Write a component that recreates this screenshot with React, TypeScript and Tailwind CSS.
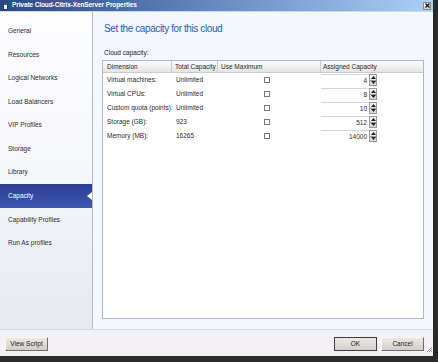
import React from 'react';

// Nav entries for the left rail
const navItems = [
  'General',
  'Resources',
  'Logical Networks',
  'Load Balancers',
  'VIP Profiles',
  'Storage',
  'Library',
  'Capacity',
  'Capability Profiles',
  'Run As profiles',
];

const capacityRows: [string, string, string][] = [
  ['Virtual machines:', 'Unlimited', '4'],
  ['Virtual CPUs:', 'Unlimited', '8'],
  ['Custom quota (points):', 'Unlimited', '10'],
  ['Storage (GB):', '923', '512'],
  ['Memory (MB):', '16265', '14000'],
];

const Spinner = () => (
  <div className="w-[8px] h-[12px] flex flex-col border border-[#9a9a9a] bg-gradient-to-b from-[#f4f4f4] to-[#d6d6d6]">
    <div className="flex-1 flex items-center justify-center border-b border-[#9a9a9a]">
      <svg width="5" height="3" viewBox="0 0 5 3">
        <path d="M0 3 L2.5 0 L5 3 Z" fill="#222" />
      </svg>
    </div>
    <div className="flex-1 flex items-center justify-center">
      <svg width="5" height="3" viewBox="0 0 5 3">
        <path d="M0 0 L2.5 3 L5 0 Z" fill="#222" />
      </svg>
    </div>
  </div>
);

const DialogButton = ({ label, isDefault }: { label: string; isDefault?: boolean }) => (
  <button
    className={`w-[43px] h-[14px] flex items-center justify-center text-[6.5px] text-[#222] bg-gradient-to-b from-[#ebe9e6] to-[#d2cfca] border ${
      isDefault ? 'border-[#3c3c3c]' : 'border-t-[#f8f8f8] border-l-[#f8f8f8] border-r-[#6e6e6e] border-b-[#6e6e6e]'
    }`}
  >
    {label}
  </button>
);

export default function App() {
  return (
    <div className="w-[438px] h-[362px] bg-[#2a2a2a] flex flex-col font-['Liberation_Sans',Arial,sans-serif] overflow-hidden">
      <div className="flex h-[356px]">
        <div className="w-[433px] flex flex-col bg-[#f5f7fe]">
          {/* Title bar */}
          <div className="h-[12px] flex items-center bg-gradient-to-r from-[#2b4886] via-[#6989c4] to-[#acd0f6] border-b border-[#c8d8ee]">
            <div className="ml-[3px] w-[5px] h-[8px] bg-[#f2f4fa] border border-[#2a3f78] flex flex-col">
              <div className="h-[2px] bg-[#3a5aa8]" />
            </div>
            <span className="ml-[4px] text-[6.5px] font-bold text-white tracking-[-0.1px] leading-none">
              Private Cloud-Citrix-XenServer Properties
            </span>
            <div className="ml-auto mr-[2px] w-[8px] h-[8px] border border-[#8a8a8a] bg-gradient-to-b from-[#f8f8f8] to-[#cfcfcf] flex items-center justify-center">
              <svg width="5" height="5" viewBox="0 0 5 5">
                <path d="M0.5 0.5 L4.5 4.5 M4.5 0.5 L0.5 4.5" stroke="#111" strokeWidth="1.3" />
              </svg>
            </div>
          </div>

          {/* Body */}
          <div className="flex h-[317px]">
            {/* Left nav */}
            <div className="w-[93px] border-r border-[#b8bcc6] bg-gradient-to-b from-[#fdfdff] via-[#f6f7fb] to-[#e6e9ef] pt-[7px]">
              {navItems.map((item) => {
                const active = item === 'Capacity';
                return (
                  <div
                    key={item}
                    className={`relative h-[23.6px] flex items-center pl-[8px] text-[6.5px] whitespace-nowrap ${
                      active ? 'bg-gradient-to-b from-[#2a3d92] to-[#4058b2] text-white' : 'text-[#2b2b33]'
                    }`}
                  >
                    {item}
                    {active && (
                      <svg className="absolute right-0 top-[7.8px]" width="5" height="8" viewBox="0 0 5 8">
                        <path d="M5 0 L0 4 L5 8 Z" fill="#ffffff" />
                      </svg>
                    )}
                  </div>
                );
              })}
            </div>

            {/* Page content */}
            <div className="flex-1 pl-[9px] pt-[11px] flex flex-col">
              <h1 className="h-[12px] pl-[2px] flex items-center text-[10px] text-[#1f60c0] tracking-[-0.4px] leading-none">
                Set the capacity for this cloud
              </h1>
              <div className="mt-[14px] h-[8px] pl-[2px] flex items-center text-[6.5px] text-[#222]">Cloud capacity:</div>
              <div className="mt-[3px] w-[322px] h-[259px] border border-[#a9bad2] bg-white text-[6.5px] text-[#2a2a2a] whitespace-nowrap">
                {/* header */}
                <div className="flex h-[12px] bg-gradient-to-b from-[#fbfbfb] to-[#e4e4e6] border-b border-[#c9ccd2]">
                  <div className="w-[69px] pl-[4px] flex items-center border-r border-[#c9ccd2]">Dimension</div>
                  <div className="w-[46px] pl-[3px] flex items-center border-r border-[#c9ccd2]">Total Capacity</div>
                  <div className="w-[103px] pl-[3px] flex items-center border-r border-[#c9ccd2]">Use Maximum</div>
                  <div className="flex-1 pl-[2px] flex items-center">Assigned Capacity</div>
                </div>
                {capacityRows.map(([dim, total, assigned]) => (
                  <div key={dim} className="flex h-[14px]">
                    <div className="w-[69px] pl-[4px] flex items-center">{dim}</div>
                    <div className="w-[46px] pl-[4px] flex items-center">{total}</div>
                    <div className="w-[103px] pl-[46px] flex items-center">
                      <div className="w-[6px] h-[6px] border border-[#7a7a7a] bg-white" />
                    </div>
                    <div className="flex-1 flex items-center">
                      <div className="w-[48px] h-[12px] border-t border-[#d4d6da] flex items-center justify-end pr-[2px]">
                        {assigned}
                      </div>
                      <Spinner />
                    </div>
                  </div>
                ))}
              </div>
            </div>
          </div>

          {/* Footer */}
          <div className="h-[27px] border-t border-[#dcdce2] bg-[#f4f1f4] flex items-center pl-[5px] pr-[1px] pt-[2px] relative">
            <DialogButton label="View Script" />
            <div className="ml-auto flex gap-[4px]">
              <DialogButton label="OK" isDefault />
              <DialogButton label="Cancel" />
            </div>
            <svg className="ml-[2px] self-end mb-[4px]" width="6" height="6" viewBox="0 0 6 6">
              <path d="M6 1 L1 6 M6 3 L3 6 M6 5 L5 6" stroke="#8a8a8a" strokeWidth="0.8" />
            </svg>
          </div>
        </div>
        <div className="flex-1 bg-[#2a2a2a]" />
      </div>
      <div className="flex-1 bg-[#2c2c2c]" />
    </div>
  );
}
